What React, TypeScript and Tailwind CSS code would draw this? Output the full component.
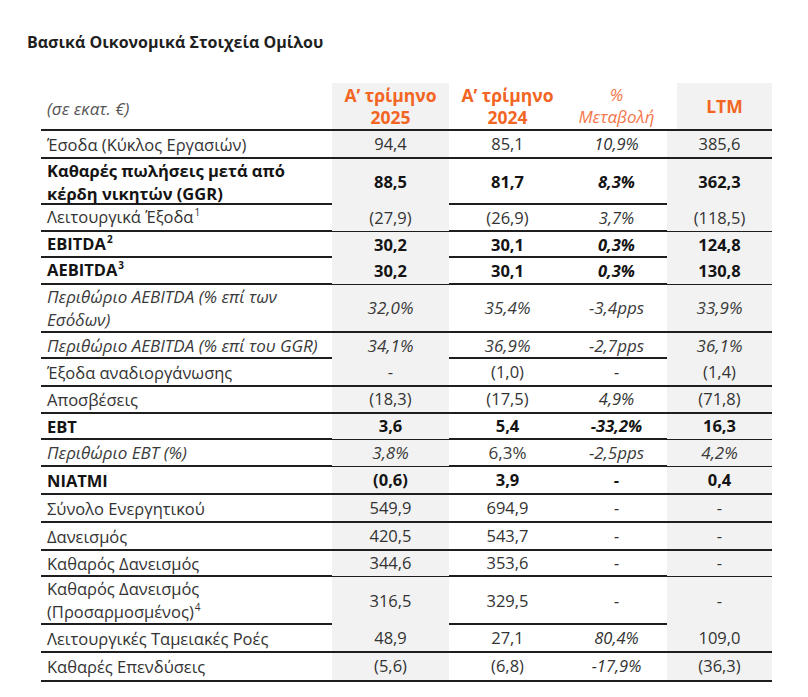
import React from 'react';

type Row = {
  label: React.ReactNode;
  values: string[];
  kind: 'normal' | 'bold' | 'italic';
  h: number;
  plain?: number[];
};

const sup = (n: string) => <span className="text-[10px] relative -top-[7px] ml-[1px]">{n}</span>;

const ROWS: Row[] = [
  { label: 'Έσοδα (Κύκλος Εργασιών)', values: ['94,4', '85,1', '10,9%', '385,6'], kind: 'normal', h: 28 },
  { label: <>Καθαρές πωλήσεις μετά από<br />κέρδη νικητών (GGR)</>, values: ['88,5', '81,7', '8,3%', '362,3'], kind: 'bold', h: 46 },
  { label: <>Λειτουργικά Έξοδα{sup('1')}</>, values: ['(27,9)', '(26,9)', '3,7%', '(118,5)'], kind: 'normal', h: 27 },
  { label: <>EBITDA{sup('2')}</>, values: ['30,2', '30,1', '0,3%', '124,8'], kind: 'bold', h: 26 },
  { label: <>AEBITDA{sup('3')}</>, values: ['30,2', '30,1', '0,3%', '130,8'], kind: 'bold', h: 27 },
  { label: <>Περιθώριο AEBITDA (% επί των<br />Εσόδων)</>, values: ['32,0%', '35,4%', '-3,4pps', '33,9%'], kind: 'italic', h: 48 },
  { label: 'Περιθώριο AEBITDA (% επί του GGR)', values: ['34,1%', '36,9%', '-2,7pps', '36,1%'], kind: 'italic', h: 26 },
  { label: 'Έξοδα αναδιοργάνωσης', values: ['-', '(1,0)', '-', '(1,4)'], kind: 'normal', h: 28 },
  { label: 'Αποσβέσεις', values: ['(18,3)', '(17,5)', '4,9%', '(71,8)'], kind: 'normal', h: 27 },
  { label: 'EBT', values: ['3,6', '5,4', '-33,2%', '16,3'], kind: 'bold', h: 26 },
  { label: 'Περιθώριο EBT (%)', values: ['3,8%', '6,3%', '-2,5pps', '4,2%'], kind: 'italic', h: 27, plain: [1] },
  { label: 'NIATMI', values: ['(0,6)', '3,9', '-', '0,4'], kind: 'bold', h: 28 },
  { label: 'Σύνολο Ενεργητικού', values: ['549,9', '694,9', '-', '-'], kind: 'normal', h: 28 },
  { label: 'Δανεισμός', values: ['420,5', '543,7', '-', '-'], kind: 'normal', h: 28 },
  { label: 'Καθαρός Δανεισμός', values: ['344,6', '353,6', '-', '-'], kind: 'normal', h: 26 },
  { label: <>Καθαρός Δανεισμός<br />(Προσαρμοσμένος){sup('4')}</>, values: ['316,5', '329,5', '-', '-'], kind: 'normal', h: 48 },
  { label: 'Λειτουργικές Ταμειακές Ροές', values: ['48,9', '27,1', '80,4%', '109,0'], kind: 'normal', h: 28 },
  { label: 'Καθαρές Επενδύσεις', values: ['(5,6)', '(6,8)', '-17,9%', '(36,3)'], kind: 'normal', h: 29 },
];

const GRID = 'grid grid-cols-[291px_117px_117px_101px_105px]';
const GREY = [true, false, false, true];

const styleFor = (kind: Row['kind']) =>
  kind === 'bold'
    ? 'font-bold text-[16.5px] text-[#141414]'
    : kind === 'italic'
      ? 'italic text-[17px] text-[#3a3a3a]'
      : 'text-[16.5px] text-[#333]';

export default function App() {
  return (
    <div className="w-[808px] h-[697px] bg-white pl-[27px] pt-[31px] text-[#2b2b2b]" style={{ fontFamily: '"Open Sans", "Noto Sans", sans-serif' }}>
      <h1 className="text-[16px] leading-[22px] font-bold text-[#1f1f1f]">Βασικά Οικονομικά Στοιχεία Ομίλου</h1>

      <div className="ml-[14px] mt-[30px] w-[731px]">
        {/* Header */}
        <div className={`${GRID} h-[48px] border-b-2 border-[#1e1e1e]`}>
          <div className="flex items-center pl-[6px] pt-[6px] italic text-[17px] text-[#555]">(σε εκατ. €)</div>
          <div className="bg-[#f2f2f2] flex flex-col items-center justify-center leading-[22px] font-bold text-[#f26522] text-[17.5px]">
            <span>A’ τρίμηνο</span>
            <span>2025</span>
          </div>
          <div className="flex flex-col items-center justify-center leading-[22px] font-bold text-[#f26522] text-[17.5px]">
            <span>A’ τρίμηνο</span>
            <span>2024</span>
          </div>
          <div className="flex flex-col items-center justify-center leading-[22px] italic text-[#f4764a] text-[17px]">
            <span>%</span>
            <span>Μεταβολή</span>
          </div>
          <div className="bg-[#f2f2f2] flex items-center justify-center font-bold text-[#f26522] text-[17.5px] ml-[10px]">LTM</div>
        </div>

        {ROWS.map((r, i) => (
          <div key={i} className={`${GRID} border-b-2 border-[#1e1e1e]`} style={{ height: r.h }}>
            <div className={`flex items-center pl-[6px] leading-[23px] whitespace-nowrap ${styleFor(r.kind)}`}>
              <span>{r.label}</span>
            </div>
            {r.values.map((v, j) => (
              <div
                key={j}
                className={`flex items-center justify-center ${GREY[j] ? 'bg-[#f2f2f2]' : ''} ${styleFor(r.kind)} ${
                  (j === 2 || r.kind === 'italic') && !(r.plain || []).includes(j) ? 'italic' : 'not-italic'
                }`}
              >
                {v}
              </div>
            ))}
          </div>
        ))}
      </div>
    </div>
  );
}
